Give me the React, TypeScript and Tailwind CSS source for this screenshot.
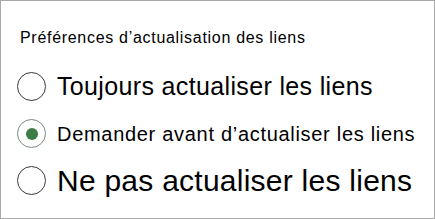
import React, { useState } from 'react';

const options = [
  { id: 'always', label: 'Toujours actualiser les liens', size: 'text-[25px] tracking-[0.35px]' },
  { id: 'ask', label: 'Demander avant d’actualiser les liens', size: 'text-[20px] tracking-[0.7px]' },
  { id: 'never', label: 'Ne pas actualiser les liens', size: 'text-[30px] tracking-[0.25px]' },
];

export default function App() {
  const [value, setValue] = useState('ask');

  return (
    <div className="w-[435px] h-[219px] bg-white border border-[#a8a8a8] pl-4 pt-[27px] text-black font-['Liberation_Sans',Arial,sans-serif]">
      <div className="text-[16px] leading-[20px] tracking-[0.7px] pl-[3px]">Préférences d’actualisation des liens</div>
      <div className="mt-[15px] flex flex-col">
        {options.map(o => (
          <Radio key={o.id} label={o.label} size={o.size}
            checked={value === o.id} onClick={() => setValue(o.id)} />
        ))}
      </div>
    </div>
  );
}

function Radio({
  label, size, checked, onClick,
}: {
  label: string; size: string; checked: boolean; onClick: () => void;
}) {
  return (
    <div className="h-[47px] flex items-center gap-[11px] cursor-pointer" onClick={onClick}>
      <span className={
        'w-[29px] h-[29px] shrink-0 rounded-full border-[1.5px] flex items-center justify-center ' +
        (checked ? 'border-[#7a8a7c]' : 'border-[#3a3a3a]')
      }>
        {checked && <span className="w-[12px] h-[12px] rounded-full bg-[#3b7d45]" />}
      </span>
      <span className={size + ' leading-none whitespace-nowrap'}>{label}</span>
    </div>
  );
}
